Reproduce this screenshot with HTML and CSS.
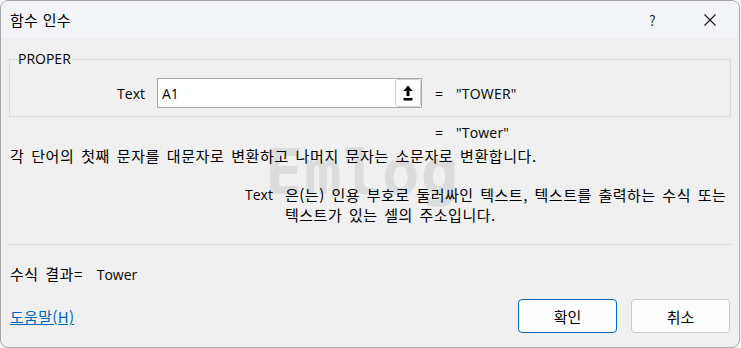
FILE: index.html
```html
<!DOCTYPE html>
<html lang="ko">
<head>
<meta charset="utf-8">
<title>함수 인수</title>
<link rel="stylesheet" href="styles.css">
</head>
<body>
<div class="window">
  <div class="titlebar">
    <span class="title">함수 인수</span>
    <span class="tb-help">?</span>
    <span class="tb-close">
      <svg width="12" height="12" viewBox="0 0 12 12"><path d="M0.5 0.5 L11.5 11.5 M11.5 0.5 L0.5 11.5" stroke="#1a1a1a" stroke-width="1.1" fill="none"/></svg>
    </span>
  </div>
  <div class="content">
    <div class="watermark">Emlog</div>
    <fieldset class="group">
      <legend class="legend">PROPER</legend>
      <div class="arg-row">
        <span class="arg-label">Text</span>
        <div class="input">
          <span class="input-text">A1</span>
          <span class="ref-btn">
            <svg width="10" height="16" viewBox="0 0 10 16"><path d="M5 0.5 L9.5 6 L6.5 6 L6.5 11 L3.5 11 L3.5 6 L0.5 6 Z" fill="#000"/><rect x="0.5" y="13" width="9" height="2.5" fill="#000"/></svg>
          </span>
        </div>
        <span class="eq">=</span>
        <span class="val">"TOWER"</span>
      </div>
    </fieldset>
    <div class="result-row">
      <span class="eq">=</span>
      <span class="val">"Tower"</span>
    </div>
    <p class="desc">각 단어의 첫째 문자를 대문자로 변환하고 나머지 문자는 소문자로 변환합니다.</p>
    <div class="arg-help">
      <span class="arg-help-name">Text</span>
      <span class="arg-help-text">은(는) 인용 부호로 둘러싸인 텍스트, 텍스트를 출력하는 수식 또는<br>텍스트가 있는 셀의 주소입니다.</span>
    </div>
    <div class="sep"></div>
    <div class="formula-result">수식 결과=<span class="fr-val">Tower</span></div>
    <div class="footer">
      <a class="help-link" href="#">도움말(H)</a>
      <div class="buttons">
        <button class="btn btn-primary">확인</button>
        <button class="btn">취소</button>
      </div>
    </div>
  </div>
</div>
</body>
</html>
```
FILE: styles.css
```css
html, body {
  margin: 0;
  padding: 0;
  background: #f7f7f7;
}
body {
  width: 741px;
  height: 348px;
  overflow: hidden;
  font-family: "Open Sans", "Noto Sans CJK KR", sans-serif;
  font-size: 14px;
  color: #000;
}
.window {
  box-sizing: border-box;
  width: 740px;
  height: 348px;
  border: 1px solid #a6a6a6;
  border-radius: 8px;
  background: #f0f0f0;
  overflow: hidden;
  display: flex;
  flex-direction: column;
}
.titlebar {
  height: 37px;
  flex: none;
  display: flex;
  align-items: center;
  background: #f2f4f8;
  font-family: "Noto Sans CJK KR", sans-serif;
}
.title {
  margin-left: 9px;
  font-size: 15px;
  letter-spacing: 0.3px;
  flex: 1;
}
.tb-help {
  font-size: 14px;
  width: 12px;
  margin-right: 43px;
  color: #1a1a1a;
}
.tb-close {
  width: 12px;
  height: 12px;
  margin-right: 23px;
  display: flex;
}
.content {
  position: relative;
  flex: 1;
  padding: 0 8px 0 8px;
  display: flex;
  flex-direction: column;
}
.watermark {
  position: absolute;
  left: 264px;
  top: 103px;
  font-family: "DejaVu Sans Mono", monospace;
  font-weight: bold;
  font-size: 63px;
  color: #dcdcdc;
  letter-spacing: 1px;
  line-height: 1;
  z-index: 0;
}
.group {
  position: relative;
  z-index: 1;
  margin: 12px 0 0 0;
  padding: 0 0 8px 0;
  box-sizing: border-box;
  border: 1px solid #dadada;
  border-radius: 0;
}
.legend {
  padding: 0 1px;
  margin-left: 7px;
  font-size: 14px;
  line-height: 18px;
}
.arg-row {
  display: flex;
  align-items: center;
  height: 30px;
  margin-top: 10px;
}
.arg-label {
  width: 135px;
  text-align: right;
  margin-right: 12px;
}
.input {
  box-sizing: border-box;
  width: 265px;
  height: 30px;
  background: #fff;
  border: 1px solid #a8a8a8;
  display: flex;
  align-items: center;
}
.input-text {
  flex: 1;
  padding-left: 4px;
}
.ref-btn {
  box-sizing: border-box;
  width: 26px;
  height: 28px;
  border: 1px solid #cfcfcf;
  border-radius: 3px;
  background: #fff;
  display: flex;
  align-items: center;
  justify-content: center;
}
.eq {
  margin-left: 13px;
  width: 21px;
}
.val {
  letter-spacing: 0.2px;
}
.result-row {
  position: relative;
  z-index: 1;
  display: flex;
  height: 18px;
  align-items: center;
  margin-top: 6px;
  padding-left: 413px;
}
.desc {
  position: relative;
  z-index: 1;
  margin: 5px 0 0 1px;
  font-family: "Noto Sans CJK KR", sans-serif;
  font-size: 15px;
  line-height: 20px;
  letter-spacing: 0.6px;
  word-spacing: 2px;
}
.arg-help {
  position: relative;
  z-index: 1;
  display: flex;
  margin-top: 19px;
  padding-left: 236px;
  line-height: 20px;
}
.arg-help-name {
  width: 40px;
}
.arg-help-text {
  font-family: "Noto Sans CJK KR", sans-serif;
  font-size: 15px;
  letter-spacing: 0.5px;
  word-spacing: 2px;
}
.sep {
  height: 1px;
  background: #d9d9d9;
  margin-top: 19px;
}
.formula-result {
  margin-top: 19px;
  margin-left: 1px;
  line-height: 20px;
  font-family: "Noto Sans CJK KR", sans-serif;
  font-size: 15px;
  letter-spacing: 0.5px;
  word-spacing: 2px;
}
.fr-val {
  font-family: "Open Sans", sans-serif;
  font-size: 14px;
  letter-spacing: 0;
  margin-left: 14px;
}
.footer {
  margin-top: 14px;
  display: flex;
  align-items: center;
  justify-content: space-between;
  padding-right: 1px;
}
.help-link {
  margin-left: 1px;
  color: #0067c0;
  font-family: "Noto Sans CJK KR", sans-serif;
  font-size: 15px;
  letter-spacing: 0.3px;
}
.buttons {
  display: flex;
  gap: 14px;
}
.btn {
  box-sizing: border-box;
  width: 99px;
  height: 34px;
  border: 1px solid #cccccc;
  border-radius: 4px;
  background: #fdfdfd;
  font-family: "Noto Sans CJK KR", sans-serif;
  font-size: 15px;
  color: #000;
  padding: 0;
}
.btn-primary {
  border: 1px solid #0067c0;
}
```
